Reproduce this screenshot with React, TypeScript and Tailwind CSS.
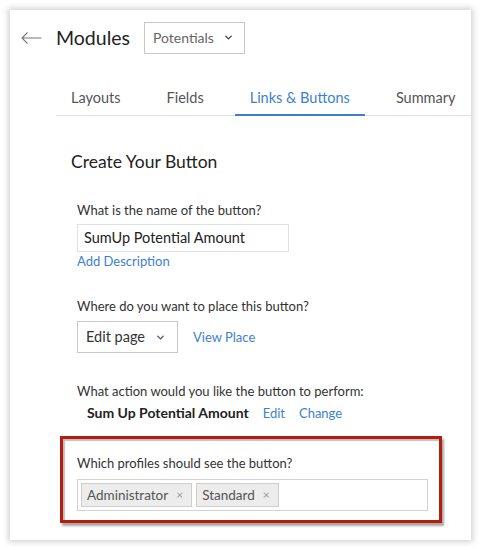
import { ChevronDown } from 'lucide-react'

const tabs = ['Layouts', 'Fields', 'Links & Buttons', 'Summary']

function Tag({ label }: { label: string }) {
  return (
    <span className="flex h-[24px] items-center gap-[8px] border border-[#cfcfcf] bg-[#ececec] pl-[5px] pr-[8px] text-[13.5px] text-[#555]">
      {label}
      <span className="text-[12px] text-[#9a9a9a]">×</span>
    </span>
  )
}

export default function App() {
  return (
    <div className="min-h-[550px] w-[481px] bg-white p-[10px] font-['Lato',sans-serif] text-[#333]">
      <div className="h-[530px] w-[461px] overflow-hidden bg-white shadow-[0_0_6px_2px_rgba(0,0,0,0.18)]">
        {/* header */}
        <div className="flex h-[43px] items-center pl-[11px] pt-[12px]">
          <svg width="21" height="12" viewBox="0 0 21 12" className="text-[#777]">
            <path d="M20.5 6H1M6.5 0.5L1 6l5.5 5.5" fill="none" stroke="currentColor" strokeWidth="1.1" />
          </svg>
          <span className="ml-[14px] text-[19.5px] leading-none text-[#222]">Modules</span>
          <div className="ml-[14px] flex h-[32px] w-[101px] items-center justify-between border border-[#c8c8c8] pl-[8px] pr-[10px] text-[14px] text-[#666]">
            Potentials
            <ChevronDown className="size-[11px] text-[#444]" strokeWidth={3} />
          </div>
        </div>

        {/* tabs */}
        <div className="ml-[46px] mt-[27px] flex h-[36px] gap-[16px] border-b border-[#e0e0e0]">
          {tabs.map((t) => (
            <div
              key={t}
              className={
                t === 'Links & Buttons'
                  ? 'mb-[-1px] shrink-0 whitespace-nowrap border-b-2 border-[#3d7fd0] px-[15px] pt-[9px] text-[14.5px] leading-[18px] text-[#3d7fd0]'
                  : 'shrink-0 whitespace-nowrap px-[15px] pt-[9px] text-[14.5px] leading-[18px] text-[#555]'
              }
            >
              {t}
            </div>
          ))}
        </div>

        {/* body */}
        <div className="pl-[61px] pt-[35px]">
          <h2 className="text-[17.5px] leading-[21px] text-[#222]">Create Your Button</h2>

          <div className="ml-[6px] mt-[30px] text-[13px] leading-[16px]">
            <p>What is the name of the button?</p>
            <div className="mt-[6px] flex h-[28px] w-[212px] items-center border border-[#dde2e8] px-[6px] text-[14.5px] text-[#222]">
              SumUp Potential Amount
            </div>
            <p className="mt-[1px] text-[#3d7fd0]">Add Description</p>

            <p className="mt-[29px]">Where do you want to place this button?</p>
            <div className="mt-[7px] flex items-center">
              <div className="flex h-[32px] w-[101px] items-center justify-between border border-[#c8c8c8] pl-[8px] pr-[11px] text-[14.5px] text-[#333]">
                Edit page
                <ChevronDown className="size-[11px] text-[#555]" strokeWidth={3} />
              </div>
              <span className="ml-[15px] text-[#3d7fd0]">View Place</span>
            </div>

            <p className="mt-[30px]">What action would you like the button to perform:</p>
            <div className="ml-[10px] mt-[6px] flex gap-[14px]">
              <span className="text-[14px] font-bold text-[#222]">Sum Up Potential Amount</span>
              <span className="text-[#3d7fd0]">Edit</span>
              <span className="text-[#3d7fd0]">Change</span>
            </div>
          </div>
        </div>

        {/* highlighted profiles block */}
        <div className="ml-[50px] mt-[15px] h-[87px] w-[382px] border-[3px] border-[#b51d0e] shadow-[2px_3px_2px_rgba(0,0,0,0.35),inset_2px_2px_1px_rgba(0,0,0,0.25)]">
          <div className="pl-[14px] pr-[11px] pt-[16px] text-[13px] leading-[16px]">
            <p>Which profiles should see the button?</p>
            <div className="mt-[8px] flex h-[32px] items-center gap-[4px] border border-[#d3d3d3] px-[3px]">
              <Tag label="Administrator" />
              <Tag label="Standard" />
            </div>
          </div>
        </div>
      </div>
    </div>
  )
}
